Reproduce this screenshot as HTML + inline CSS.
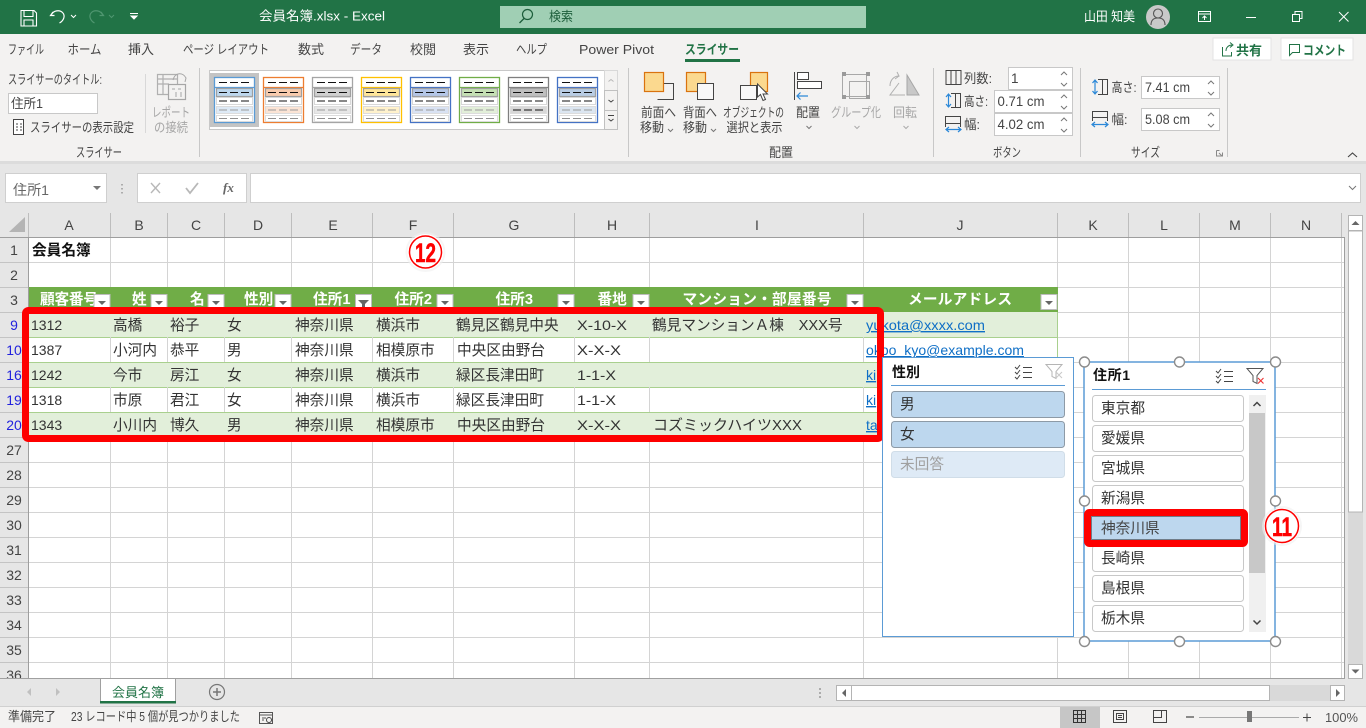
<!DOCTYPE html>
<html lang="ja"><head><meta charset="utf-8"><title>会員名簿.xlsx - Excel</title>
<style>
html,body{margin:0;padding:0;background:#e6e6e6;width:1366px;height:728px;overflow:hidden}
svg{display:block;position:absolute;left:0;top:0}
text{font-family:"Liberation Sans","Noto Sans CJK JP",sans-serif;font-size:12.8px;fill:#444}
.c{font-size:14.67px;fill:#333}
.n{font-size:14px;fill:#333}
.h{font-size:14.67px;fill:#fff;font-weight:bold}
.ch{font-size:14px;fill:#444;text-anchor:middle}
.rh{font-size:14px;fill:#444;text-anchor:middle}
.rb{font-size:14px;fill:#2222dd;text-anchor:middle}
.l{font-size:14px;fill:#0f6fc6;text-decoration:underline}
.g{fill:#a6a6a6}
.s{font-size:14.67px;fill:#333}
.sb{font-size:14px;fill:#111;font-weight:bold}
.w{fill:#fff}
.in{font-size:13.5px;fill:#444}
.ln{stroke:#d4d4d4;stroke-width:1}
.cv{fill:none;stroke:#777;stroke-width:1}
.g1{stroke:#444;fill:none;stroke-width:1}
.blue{stroke:#2b88d8;fill:none;stroke-width:1.2}
</style></head><body>
<svg width="1366" height="728" viewBox="0 0 1366 728" xmlns="http://www.w3.org/2000/svg">
<defs>
<g id="item">
<rect x="0.5" y="0.5" width="40" height="45" fill="#fff" stroke="var(--c)" stroke-width="1.3"/>
<line x1="0" y1="10.5" x2="41" y2="10.5" stroke="var(--c)" stroke-width="1.2"/>
<rect x="2.5" y="11.5" width="36" height="8" fill="var(--a)" stroke="#a0a0a0" stroke-width="1.2"/>
<rect x="2.5" y="20.5" width="36" height="7" fill="#fff" stroke="#d8d8d8"/>
<rect x="2.5" y="29.5" width="36" height="7" fill="var(--d)" stroke="#dcdcdc"/>
<rect x="2.5" y="38.5" width="36" height="6" fill="#fff" stroke="#dcdcdc"/>
<path d="M5 5.5h8M16 5.5h8M27 5.5h8M5 15.5h8M16 15.5h8M27 15.5h8M5 24h8M16 24h8M27 24h8" stroke="#111" stroke-width="1"/>
<path d="M5 33h8M16 33h8M27 33h8" stroke="var(--e,#999)" stroke-width="1"/>
<path d="M5 41.5h8M16 41.5h8M27 41.5h8" stroke="#8f8f8f" stroke-width="1"/>
</g>
<g id="spin"><path class="cv" d="M-3 3L0 0L3 3" stroke="#888"/><path class="cv" d="M-3 11L0 14L3 11"/></g>
<g id="fb"><rect x="0.5" y="0.5" width="16" height="15" fill="#fff" stroke="#bcbcbc"/><path d="M4.500 7h8l-4 4z" fill="#666"/></g>
<g id="multi"><path d="M0 3l2 2 3-4M0 8l2 2 3-4M0 13l2 2 3-4" fill="none" stroke="#444" stroke-width="1"/><path d="M8 3.500h9M8 8.500h9M8 13.500h9" stroke="#444" stroke-width="1"/></g>
<rect id="btn" x="0.5" y="0.500" width="151" height="26" rx="3" fill="#fff" stroke="#c8c8c8"/>
</defs>

<!-- title bar -->
<rect x="0" y="0" width="1366" height="34" fill="#217346"/>
<path d="M21 10.500h13l2.500 2.500v13h-15.500zM24 10.500v6h9v-6M24 26v-6h9v6" fill="none" stroke="#fff" stroke-width="1.100"/>
<path d="M53 13l-2.500 3.500h4M51.500 15.500c2-4 8-5 11-2 3 3 1.500 8-3 10.500" fill="none" stroke="#fff" stroke-width="1.200" transform="translate(0,-1)"/>
<path d="M71 15l2.500 2.500L76 15" fill="none" stroke="#fff"/>
<path d="M101 13l2.500 3.500h-4M102.500 15.500c-2-4-8-5-11-2-3 3-1.500 8 3 10.500" fill="none" stroke="#4f9670" stroke-width="1.200" transform="translate(0,-1)"/>
<path d="M109 15l2.500 2.500L114 15" fill="none" stroke="#4f9670"/>
<path d="M130 13.500h8M131 16l3 3 3-3z" fill="#fff" stroke="#fff"/>
<text x="259" y="20.500" class="w" textLength="126" lengthAdjust="spacingAndGlyphs">会員名簿.xlsx  -  Excel</text>
<rect x="500" y="6" width="366" height="22" fill="#a0cfb4"/>
<circle cx="527.500" cy="14.500" r="5" fill="none" stroke="#1d5e3b" stroke-width="1.200"/>
<path d="M524 18.500l-4.500 4.500" stroke="#1d5e3b" stroke-width="1.300"/>
<text x="549" y="21" style="fill:#1d5e3b" textLength="24" lengthAdjust="spacingAndGlyphs">検索</text>
<text x="1084" y="21" class="w" textLength="51" lengthAdjust="spacingAndGlyphs">山田 知美</text>
<circle cx="1158" cy="17" r="12" fill="#c9c9c9"/>
<circle cx="1158" cy="13.500" r="4.500" fill="none" stroke="#555" stroke-width="1.100"/>
<path d="M1151 25c0-5 3-7 7-7s7 2 7 7" fill="none" stroke="#555" stroke-width="1.100"/>
<path d="M1198.500 11.500h12v10h-12zM1198.500 14h12M1204.500 20v-4M1202.500 18l2-2 2 2" fill="none" stroke="#fff"/>
<path d="M1246 17.500h10" stroke="#fff"/>
<path d="M1292.500 14.500h7v7h-7zM1295 14.500v-3h7v7h-2.500" fill="none" stroke="#fff"/>
<path d="M1339 12l9.500 9.500M1348.500 12l-9.500 9.500" stroke="#fff"/>

<!-- ribbon -->
<rect x="0" y="34" width="1366" height="127" fill="#f3f2f1"/>
<rect x="0" y="161" width="1366" height="3" fill="#dcdcdc"/>
<g>
<text x="8" y="54" textLength="36" lengthAdjust="spacingAndGlyphs">ファイル</text>
<text x="67.500" y="54" textLength="34" lengthAdjust="spacingAndGlyphs">ホーム</text>
<text x="128" y="54" textLength="26" lengthAdjust="spacingAndGlyphs">挿入</text>
<text x="183" y="54" textLength="86" lengthAdjust="spacingAndGlyphs">ページ レイアウト</text>
<text x="298" y="54" textLength="26" lengthAdjust="spacingAndGlyphs">数式</text>
<text x="350" y="54" textLength="32" lengthAdjust="spacingAndGlyphs">データ</text>
<text x="410" y="54" textLength="26" lengthAdjust="spacingAndGlyphs">校閲</text>
<text x="463" y="54" textLength="26" lengthAdjust="spacingAndGlyphs">表示</text>
<text x="516" y="54" textLength="31" lengthAdjust="spacingAndGlyphs">ヘルプ</text>
<text x="579" y="54" textLength="75" lengthAdjust="spacingAndGlyphs">Power Pivot</text>
<text x="685" y="54" style="fill:#217346;font-weight:bold" textLength="54" lengthAdjust="spacingAndGlyphs">スライサー</text>
</g>
<rect x="685" y="59" width="55" height="3" fill="#217346"/>
<rect x="1213" y="38" width="58" height="22" fill="#fff" stroke="#e3e3e3"/>
<path d="M1222.500 47v9h9v-4M1226 51c0-4 3-6 6-6M1230 42.500l3 2.500-3 2.500" fill="none" stroke="#217346"/>
<text x="1236" y="55" style="fill:#217346;font-weight:bold;font-size:13px" textLength="26" lengthAdjust="spacingAndGlyphs">共有</text>
<rect x="1281" y="38" width="72" height="22" fill="#fff" stroke="#e3e3e3"/>
<path d="M1289.500 44.500h10v8h-7l-3 3z" fill="none" stroke="#217346"/>
<text x="1303" y="55" style="fill:#217346;font-weight:bold;font-size:13px" textLength="43" lengthAdjust="spacingAndGlyphs">コメント</text>

<text x="8" y="84" textLength="94" lengthAdjust="spacingAndGlyphs">スライサーのタイトル:</text>
<rect x="8.500" y="93.500" width="89" height="20" fill="#fff" stroke="#c8c8c8"/>
<text x="11" y="108" style="font-size:13px" textLength="32" lengthAdjust="spacingAndGlyphs">住所1</text>
<path d="M13.500 119.500h10v15h-10z" fill="#fff" stroke="#444"/>
<path d="M16 124h2M20 124h2M16 127h2M20 127h2M16 130h2M20 130h2" stroke="#444"/>
<text x="30" y="132" textLength="104" lengthAdjust="spacingAndGlyphs">スライサーの表示設定</text>
<line x1="145.500" y1="74" x2="145.500" y2="133" stroke="#d8d8d8"/>
<path d="M157.500 74.500h20v20h-20zM157.500 79h20M157 84h12M163 74v20" fill="none" stroke="#b0b0b0" stroke-width="1.200"/>
<rect x="168.500" y="84.500" width="17" height="15" fill="#f3f2f1" stroke="#a6a6a6" stroke-width="1.200"/>
<path d="M173 80c2-8 10-8 13-2l-1 4M172 89h3M178 89h3M176 92v5M181 92v5" fill="none" stroke="#a6a6a6"/>
<text x="152" y="117" class="g" textLength="38" lengthAdjust="spacingAndGlyphs">レポート</text>
<text x="154" y="132" class="g" textLength="34" lengthAdjust="spacingAndGlyphs">の接続</text>
<text x="76" y="157" textLength="46" lengthAdjust="spacingAndGlyphs">スライサー</text>
<line x1="199.500" y1="68" x2="199.500" y2="157" stroke="#c8c8c8"/>

<!-- gallery -->
<rect x="209.500" y="70.500" width="408" height="59" fill="#fff" stroke="#c8c8c8" stroke-width="1"/>
<rect x="210" y="73" width="49" height="54" fill="#c4c4c4"/>
<use href="#item" x="214" y="77" style="--c:#5b9bd5;--a:#bdd7ee;--d:#deeaf6"/>
<use href="#item" x="263" y="77" style="--c:#ed7d31;--a:#f8cbad;--d:#fbe4d5"/>
<use href="#item" x="312" y="77" style="--c:#a5a5a5;--a:#d0d0d0;--d:#e7e7e7"/>
<use href="#item" x="361" y="77" style="--c:#ffc000;--a:#ffe699;--d:#fff2cc"/>
<use href="#item" x="410" y="77" style="--c:#4472c4;--a:#b4c6e7;--d:#d9e2f3"/>
<use href="#item" x="459" y="77" style="--c:#70ad47;--a:#c5e0b4;--d:#e2efd9"/>
<use href="#item" x="508" y="77" style="--c:#7f7f7f;--a:#bfbfbf;--d:#d8d8d8;--e:#111"/>
<use href="#item" x="557" y="77" style="--c:#4472c4;--a:#b8cce4;--d:#dce6f1"/>
<rect x="604.500" y="70.500" width="13" height="20" fill="#f3f2f1" stroke="#d8d8d8"/>
<rect x="604.500" y="90.500" width="13" height="20" fill="#f3f2f1" stroke="#c0c0c0"/>
<rect x="604.500" y="110.500" width="13" height="19" fill="#f3f2f1" stroke="#c0c0c0"/>
<path d="M608.500 81.500l2.500-2 2.500 2" fill="none" stroke="#b8b8b8"/>
<path d="M608.500 100l2.500 2 2.500-2" fill="none" stroke="#444"/>
<path d="M608 115.500h6M608.500 119l2.500 2 2.500-2" fill="none" stroke="#444"/>
<line x1="628.500" y1="68" x2="628.500" y2="157" stroke="#c8c8c8"/>

<!-- arrange -->
<path d="M655 83.500h18.500v16h-16" fill="none" stroke="#444"/>
<rect x="644.500" y="72.500" width="19" height="19" fill="#fbd98f" stroke="#d9730f" stroke-width="1.200"/>
<text x="641" y="117" textLength="35" lengthAdjust="spacingAndGlyphs">前面へ</text>
<text x="640" y="132" textLength="24" lengthAdjust="spacingAndGlyphs">移動</text>
<path d="M668 129l2.500 2.500 2.500-2.500" class="cv"/>
<rect x="686.500" y="72.500" width="19" height="19" fill="#fbd98f" stroke="#d9730f" stroke-width="1.200"/>
<rect x="697.500" y="83.500" width="16" height="16" fill="#f8f8f8" stroke="#444"/>
<text x="683" y="117" textLength="34" lengthAdjust="spacingAndGlyphs">背面へ</text>
<text x="683" y="132" textLength="24" lengthAdjust="spacingAndGlyphs">移動</text>
<path d="M711 129l2.500 2.500 2.500-2.500" class="cv"/>
<rect x="750.500" y="72.500" width="17" height="19" fill="#fbd98f" stroke="#d9730f" stroke-width="1.200"/>
<rect x="740.500" y="85.500" width="16" height="14" fill="#f8f8f8" stroke="#444"/>
<path d="M757.500 84v13l3-2.500 2.500 6 2.500-1-2.500-5.500h4.500z" fill="#fff" stroke="#444"/>
<text x="723" y="117" textLength="61" lengthAdjust="spacingAndGlyphs">オブジェクトの</text>
<text x="726.500" y="132" textLength="56" lengthAdjust="spacingAndGlyphs">選択と表示</text>
<path d="M794.500 72v28" stroke="#444"/>
<rect x="797.500" y="72.500" width="11" height="7" fill="#fff" stroke="#444"/>
<rect x="797.500" y="81.500" width="24" height="7" fill="#fff" stroke="#444"/>
<path d="M808 96h-11M800.500 92.500L797 96l3.500 3.500" class="blue"/>
<text x="796" y="117" textLength="24" lengthAdjust="spacingAndGlyphs">配置</text>
<path d="M806.500 126l2.500 2.500 2.500-2.500" class="cv"/>
<path d="M842.500 74.500h24v22h-24zM849.500 81.500h20v17h-20z" fill="none" stroke="#a8a8a8"/>
<path d="M842 72h4v4h-4zM866 72h4v4h-4zM842 95h4v4h-4zM866 95h4v4h-4z" fill="#9a9a9a"/>
<text x="831" y="117" class="g" textLength="50" lengthAdjust="spacingAndGlyphs">グループ化</text>
<path d="M854.500 126l2.500 2.500 2.500-2.500" class="cv" style="stroke:#aaa"/>
<path d="M907 75l12 20h-12z" fill="#c8c8c8" stroke="#a6a6a6"/>
<path d="M905 95h-15l9-12M890 86c0-6 4-10 9-10l-2-4M899 76l-4 3" fill="none" stroke="#b0b0b0"/>
<text x="893" y="117" class="g" textLength="24" lengthAdjust="spacingAndGlyphs">回転</text>
<path d="M903.500 126l2.500 2.500 2.500-2.500" class="cv" style="stroke:#aaa"/>
<text x="769" y="157" textLength="24" lengthAdjust="spacingAndGlyphs">配置</text>
<line x1="933.500" y1="68" x2="933.500" y2="157" stroke="#c8c8c8"/>

<!-- buttons group -->
<path d="M946 70.500h15v14h-15zM951 70.500v14M956 70.500v14" class="g1"/>
<text x="964" y="83" textLength="28" lengthAdjust="spacingAndGlyphs">列数:</text>
<rect x="1008.500" y="67.500" width="64" height="22" fill="#fff" stroke="#c8c8c8"/>
<text x="1011" y="83" class="in">1</text><use href="#spin" x="1064" y="72"/>
<path d="M951 93.500h9.500v14H951M955.500 93.500v14" class="g1"/>
<path d="M948.500 94v13M946 97l2.500-3 2.500 3M946 104l2.500 3 2.500-3" class="blue"/>
<text x="964" y="106" textLength="24" lengthAdjust="spacingAndGlyphs">高さ:</text>
<rect x="994.500" y="90.500" width="78" height="22" fill="#fff" stroke="#c8c8c8"/>
<text x="997.500" y="106" class="in" textLength="47" lengthAdjust="spacingAndGlyphs">0.71 cm</text><use href="#spin" x="1064" y="95"/>
<path d="M945.500 116.500h15v7h-15zM945.500 123v4M960.500 123v4" class="g1"/>
<path d="M946 129.500h15M949 127l-3 2.500 3 2.500M958 127l3 2.500-3 2.500" class="blue"/>
<text x="964" y="129" textLength="16" lengthAdjust="spacingAndGlyphs">幅:</text>
<rect x="994.500" y="113.500" width="78" height="22" fill="#fff" stroke="#c8c8c8"/>
<text x="997.500" y="129" class="in" textLength="47" lengthAdjust="spacingAndGlyphs">4.02 cm</text><use href="#spin" x="1064" y="118"/>
<text x="993" y="157" textLength="28" lengthAdjust="spacingAndGlyphs">ボタン</text>
<line x1="1080.500" y1="68" x2="1080.500" y2="157" stroke="#c8c8c8"/>

<!-- size group -->
<path d="M1098 79.500h9.500v15H1098M1102.500 79.500v15" class="g1"/>
<path d="M1095 80v14M1092.500 83l2.500-3 2.500 3M1092.500 91l2.500 3 2.500-3" class="blue"/>
<text x="1111.500" y="92" textLength="25" lengthAdjust="spacingAndGlyphs">高さ:</text>
<rect x="1141.500" y="76.500" width="78" height="22" fill="#fff" stroke="#c8c8c8"/>
<text x="1145" y="92" class="in" textLength="45" lengthAdjust="spacingAndGlyphs">7.41 cm</text><use href="#spin" x="1211" y="81"/>
<path d="M1092.500 111.500h15v6h-15zM1092.500 117v4M1107.500 117v4" class="g1"/>
<path d="M1092 124.500h16M1095 122l-3 2.500 3 2.500M1105 122l3 2.500-3 2.500" class="blue"/>
<text x="1111.500" y="124" textLength="16" lengthAdjust="spacingAndGlyphs">幅:</text>
<rect x="1141.500" y="108.500" width="78" height="22" fill="#fff" stroke="#c8c8c8"/>
<text x="1145" y="124" class="in" textLength="45" lengthAdjust="spacingAndGlyphs">5.08 cm</text><use href="#spin" x="1211" y="113"/>
<text x="1131" y="157" textLength="29" lengthAdjust="spacingAndGlyphs">サイズ</text>
<path d="M1216.500 150.500h3M1216.500 150.500v5.500h6v-3M1219 153l3 3M1222.500 152.500v3.500h-3" fill="none" stroke="#888"/>
<line x1="1227.500" y1="68" x2="1227.500" y2="157" stroke="#c8c8c8"/>
<path d="M1348 157l4.500-4 4.500 4" fill="none" stroke="#444" stroke-width="1.100"/>

<!-- formula bar -->
<rect x="5.500" y="173.500" width="101" height="29" fill="#fff" stroke="#cfcfcf"/>
<text x="13" y="195" style="font-size:14px;fill:#666" textLength="36" lengthAdjust="spacingAndGlyphs">住所1</text>
<path d="M93 186h8l-4 4z" fill="#777"/>
<path d="M122 184v1.500M122 188v1.500M122 192v1.500" stroke="#999" stroke-width="1.500"/>
<rect x="137.500" y="173.500" width="109" height="29" fill="#fff" stroke="#cfcfcf"/>
<path d="M151 183l9 10M160 183l-9 10" stroke="#b8b8b8" stroke-width="1.400"/>
<path d="M186 188l4 5 8-10" fill="none" stroke="#b8b8b8" stroke-width="1.800"/>
<text x="223" y="192" style="font-family:'Liberation Serif',serif;font-style:italic;font-weight:bold;font-size:13px;fill:#666">fx</text>
<rect x="250.500" y="173.500" width="1110" height="29" fill="#fff" stroke="#cfcfcf"/>
<path d="M1349 186l3.500 3.500 3.500-3.500" fill="none" stroke="#777"/>

<!-- sheet -->
<rect x="28" y="237" width="1316" height="441" fill="#fff"/>
<rect x="0" y="213" width="1344" height="24" fill="#e6e6e6"/>
<rect x="0" y="237" width="28" height="441" fill="#e6e6e6"/>
<path d="M25 217v15H9z" fill="#b4b4b4"/>
<path class="ln" d="M110.500 237V678M167.500 237V678M224.500 237V678M291.500 237V678M372.500 237V678M453.500 237V678M574.500 237V678M649.500 237V678M863.500 237V678M1057.500 237V678M1128.500 237V678M1199.500 237V678M1270.500 237V678M1341.500 237V678"/>
<path class="ln" d="M28 262.500H1344M28 287.500H1344M28 312.500H1344M28 337.500H1344M28 362.500H1344M28 387.500H1344M28 412.500H1344M28 437.500H1344M28 462.500H1344M28 487.500H1344M28 512.500H1344M28 537.500H1344M28 562.500H1344M28 587.500H1344M28 612.500H1344M28 637.500H1344M28 662.500H1344"/>
<path stroke="#bdbdbd" d="M28.500 213V237M110.500 213V237M167.500 213V237M224.500 213V237M291.500 213V237M372.500 213V237M453.500 213V237M574.500 213V237M649.500 213V237M863.500 213V237M1057.500 213V237M1128.500 213V237M1199.500 213V237M1270.500 213V237M1341.500 213V237"/>
<path stroke="#c4c4c4" d="M0 262.500H28M0 287.500H28M0 312.500H28M0 337.500H28M0 362.500H28M0 387.500H28M0 412.500H28M0 437.500H28M0 462.500H28M0 487.500H28M0 512.500H28M0 537.500H28M0 562.500H28M0 587.500H28M0 612.500H28M0 637.500H28M0 662.500H28"/>
<path stroke="#9e9e9e" d="M0 237.500H1344M28.500 237V678M1344.500 237V678"/>
<text class="ch" x="69" y="230">A</text><text class="ch" x="139" y="230">B</text><text class="ch" x="196" y="230">C</text><text class="ch" x="258" y="230">D</text><text class="ch" x="333" y="230">E</text><text class="ch" x="413" y="230">F</text><text class="ch" x="514" y="230">G</text><text class="ch" x="612" y="230">H</text><text class="ch" x="757" y="230">I</text><text class="ch" x="960" y="230">J</text><text class="ch" x="1093" y="230">K</text><text class="ch" x="1164" y="230">L</text><text class="ch" x="1235" y="230">M</text><text class="ch" x="1306" y="230">N</text>
<text class="rh" x="14" y="255">1</text><text class="rh" x="14" y="280">2</text><text class="rh" x="14" y="305">3</text>
<text class="rb" x="14" y="330">9</text><text class="rb" x="14" y="355">10</text><text class="rb" x="14" y="380">16</text><text class="rb" x="14" y="405">19</text><text class="rb" x="14" y="430">20</text>
<text class="rh" x="14" y="455">27</text><text class="rh" x="14" y="480">28</text><text class="rh" x="14" y="505">29</text><text class="rh" x="14" y="530">30</text><text class="rh" x="14" y="555">31</text><text class="rh" x="14" y="580">32</text><text class="rh" x="14" y="605">33</text><text class="rh" x="14" y="630">34</text><text class="rh" x="14" y="655">35</text><text class="rh" x="14" y="680">36</text>
<rect x="0" y="678" width="1366" height="1" fill="#a0a0a0"/>

<text x="32" y="255" style="font-size:14.67px;font-weight:bold;fill:#111">会員名簿</text>
<!-- table -->
<rect x="29" y="287" width="1029" height="25" fill="#70ad47"/>
<rect x="29" y="312" width="1029" height="25" fill="#e2efda"/>
<rect x="29" y="337" width="1029" height="25" fill="#fff"/>
<rect x="29" y="362" width="1029" height="25" fill="#e2efda"/>
<rect x="29" y="387" width="1029" height="25" fill="#fff"/>
<rect x="29" y="412" width="1029" height="25" fill="#e2efda"/>
<path stroke="#a9d08e" d="M29 337.500H1058M29 362.500H1058M29 387.500H1058M29 412.500H1058M29 437.500H1058M1057.500 312V438"/>
<path class="ln" d="M110.500 337V362M167.500 337V362M224.500 337V362M291.500 337V362M372.500 337V362M453.500 337V362M574.500 337V362M649.500 337V362M863.500 337V362M110.500 387V412M167.500 387V412M224.500 387V412M291.500 387V412M372.500 387V412M453.500 387V412M574.500 387V412M649.500 387V412M863.500 387V412"/>
<text class="h" x="40" y="304" textLength="58">顧客番号</text><text class="h" x="132" y="304">姓</text><text class="h" x="190" y="304">名</text><text class="h" x="244" y="304">性別</text><text class="h" x="313" y="304">住所1</text><text class="h" x="394.500" y="304">住所2</text><text class="h" x="495.500" y="304">住所3</text><text class="h" x="597.500" y="304">番地</text><text class="h" x="682.500" y="304" textLength="149">マンション・部屋番号</text><text class="h" x="908" y="304" textLength="104">メールアドレス</text>
<use href="#fb" x="93.500" y="294"/><use href="#fb" x="150.500" y="294"/><use href="#fb" x="207.500" y="294"/><use href="#fb" x="274.500" y="294"/>
<rect x="355.500" y="294.500" width="16" height="15" fill="#fff" stroke="#bcbcbc"/><path d="M358 300h11l-4 4v5h-3v-5z" fill="#666"/>
<use href="#fb" x="436.500" y="294"/><use href="#fb" x="557.500" y="294"/><use href="#fb" x="632.500" y="294"/><use href="#fb" x="846.500" y="294"/><use href="#fb" x="1040.500" y="294"/>

<text class="n" x="31" y="330">1312</text><text class="c" x="113" y="330">高橋</text><text class="c" x="170" y="330">裕子</text><text class="c" x="227" y="330">女</text><text class="c" x="295" y="330">神奈川県</text><text class="c" x="376" y="330">横浜市</text><text class="c" x="456" y="330">鶴見区鶴見中央</text><text class="n" x="577" y="330" textLength="50" lengthAdjust="spacingAndGlyphs">X-10-X</text><text class="c" x="652" y="330">鶴見マンションＡ棟　XXX号</text><text class="l" x="866" y="330" textLength="119" lengthAdjust="spacingAndGlyphs">yukota@xxxx.com</text>
<text class="n" x="31" y="355">1387</text><text class="c" x="113" y="355">小河内</text><text class="c" x="170" y="355">恭平</text><text class="c" x="227" y="355">男</text><text class="c" x="295" y="355">神奈川県</text><text class="c" x="376" y="355">相模原市</text><text class="c" x="457" y="355">中央区由野台</text><text class="n" x="577" y="355" textLength="44" lengthAdjust="spacingAndGlyphs">X-X-X</text><text class="l" x="866" y="355" textLength="158" lengthAdjust="spacingAndGlyphs">okoo_kyo@example.com</text>
<text class="n" x="31" y="380">1242</text><text class="c" x="113" y="380">今市</text><text class="c" x="170" y="380">房江</text><text class="c" x="227" y="380">女</text><text class="c" x="295" y="380">神奈川県</text><text class="c" x="376" y="380">横浜市</text><text class="c" x="456" y="380">緑区長津田町</text><text class="n" x="577" y="380" textLength="39" lengthAdjust="spacingAndGlyphs">1-1-X</text><text class="l" x="866" y="380">ki</text>
<text class="n" x="31" y="405">1318</text><text class="c" x="113" y="405">市原</text><text class="c" x="170" y="405">君江</text><text class="c" x="227" y="405">女</text><text class="c" x="295" y="405">神奈川県</text><text class="c" x="376" y="405">横浜市</text><text class="c" x="456" y="405">緑区長津田町</text><text class="n" x="577" y="405" textLength="39" lengthAdjust="spacingAndGlyphs">1-1-X</text><text class="l" x="866" y="405">ki</text>
<text class="n" x="31" y="430">1343</text><text class="c" x="113" y="430">小川内</text><text class="c" x="170" y="430">博久</text><text class="c" x="227" y="430">男</text><text class="c" x="295" y="430">神奈川県</text><text class="c" x="376" y="430">相模原市</text><text class="c" x="457" y="430">中央区由野台</text><text class="n" x="577" y="430" textLength="44" lengthAdjust="spacingAndGlyphs">X-X-X</text><text class="c" x="653" y="430" textLength="149" lengthAdjust="spacingAndGlyphs">コズミックハイツXXX</text><text class="l" x="866" y="430">ta</text>

<rect x="25.500" y="310.500" width="855" height="128" rx="3" fill="none" stroke="#fe0000" stroke-width="7"/>

<!-- slicer gender -->
<rect x="882.500" y="357.500" width="191" height="279" fill="#fff" stroke="#5b9bd5"/>
<text x="892" y="377" class="sb">性別</text>
<line x1="891" y1="385.500" x2="1065" y2="385.500" stroke="#5b9bd5"/>
<use href="#multi" x="1015" y="364"/>
<path d="M1046 364.500h16l-6 7v7l-4-2v-5z" fill="none" stroke="#b5b5b5"/>
<path d="M1056 372l6 6M1062 372l-6 6" stroke="#c8c8c8"/>
<rect x="891.500" y="391.500" width="173" height="26" rx="3" fill="#bdd7ee" stroke="#8d9aa6"/>
<text x="900" y="409" class="s">男</text>
<rect x="891.500" y="421.500" width="173" height="26" rx="3" fill="#bdd7ee" stroke="#8d9aa6"/>
<text x="900" y="439" class="s">女</text>
<rect x="891.500" y="451.500" width="173" height="26" rx="3" fill="#deeaf6" stroke="#d0dde8"/>
<text x="900" y="469" class="s" style="fill:#a0a0a0">未回答</text>

<!-- slicer address -->
<rect x="1084" y="362" width="191" height="279" fill="#fff" stroke="#5b9bd5" stroke-width="1.500"/>
<text x="1093" y="380" class="sb" textLength="37">住所1</text>
<line x1="1092" y1="389.500" x2="1266" y2="389.500" stroke="#5b9bd5"/>
<use href="#multi" x="1216" y="368"/>
<path d="M1247 368.500h16l-6 7v8l-4-2v-6z" fill="none" stroke="#555"/>
<path d="M1258 378l5.500 5.500M1263.500 378l-5.500 5.500" stroke="#e33" stroke-width="1.100"/>
<use href="#btn" x="1092" y="395"/><text x="1101" y="413" class="s">東京都</text>
<use href="#btn" x="1092" y="425"/><text x="1101" y="443" class="s">愛媛県</text>
<use href="#btn" x="1092" y="455"/><text x="1101" y="473" class="s">宮城県</text>
<use href="#btn" x="1092" y="485"/><text x="1101" y="503" class="s">新潟県</text>
<use href="#btn" x="1092" y="545"/><text x="1101" y="563" class="s">長崎県</text>
<use href="#btn" x="1092" y="575"/><text x="1101" y="593" class="s">島根県</text>
<use href="#btn" x="1092" y="605"/><text x="1101" y="623" class="s">栃木県</text>
<rect x="1249" y="395" width="17" height="237" fill="#f0f0f0"/>
<rect x="1249" y="413" width="16" height="160" fill="#c8c8c8"/>
<path d="M1253.500 406l3.500-3.500 3.500 3.500M1253.500 620.500l3.500 3.500 3.500-3.500" fill="none" stroke="#444" stroke-width="1.500"/>
<rect x="1087.500" y="512.500" width="157" height="31" rx="2" fill="#bdd7ee" stroke="#fe0000" stroke-width="7"/>
<rect x="1091.500" y="516.500" width="149" height="23" fill="none" stroke="#222" stroke-dasharray="1 1"/>
<text x="1101" y="533" class="s" style="fill:#444">神奈川県</text>
<g fill="#fff" stroke="#8c8c8c" stroke-width="1.400">
<circle cx="1084.500" cy="362" r="5"/><circle cx="1179.500" cy="362" r="5"/><circle cx="1275.500" cy="362" r="5"/>
<circle cx="1084.500" cy="501" r="5"/><circle cx="1275.500" cy="501" r="5"/>
<circle cx="1084.500" cy="641.500" r="5"/><circle cx="1179.500" cy="641.500" r="5"/><circle cx="1275.500" cy="641.500" r="5"/>
</g>
<!-- callouts -->
<circle cx="425.500" cy="252" r="20" fill="#f0f0f0" opacity=".6"/><circle cx="425.500" cy="252" r="18" fill="#fff"/>
<circle cx="425.500" cy="252" r="16" fill="#fff" stroke="#fe0000" stroke-width="1.500"/>
<text x="415" y="262" style="font-size:27px;font-weight:bold;fill:#fe0000;stroke:#fe0000;stroke-width:.5" textLength="21" lengthAdjust="spacingAndGlyphs">12</text>
<circle cx="1282" cy="526" r="20" fill="#f0f0f0" opacity=".6"/><circle cx="1282" cy="526" r="18" fill="#fff"/>
<circle cx="1282" cy="526" r="16.500" fill="#fff" stroke="#fe0000" stroke-width="1.500"/>
<text x="1272" y="536" style="font-size:27px;font-weight:bold;fill:#fe0000;stroke:#fe0000;stroke-width:.5" textLength="20" lengthAdjust="spacingAndGlyphs">11</text>

<!-- v scrollbar -->
<rect x="1345" y="213" width="21" height="466" fill="#e6e6e6"/>
<rect x="1348" y="231" width="15" height="433" fill="#d9d9d9"/>
<rect x="1348.500" y="215.500" width="14" height="15" fill="#fff" stroke="#b4b4b4"/>
<path d="M1351.500 225h8l-4-4z" fill="#666"/>
<rect x="1348.500" y="231" width="14" height="281" fill="#fff" stroke="#b4b4b4"/>
<rect x="1348.500" y="664.500" width="14" height="14" fill="#fff" stroke="#b4b4b4"/>
<path d="M1351.500 669.500h8l-4 4z" fill="#666"/>

<!-- tab strip -->
<rect x="0" y="679" width="1366" height="27" fill="#e6e6e6"/>
<path d="M31 688v8l-4-4zM56 688v8l4-4z" fill="#c0c0c0"/>
<path d="M100.500 703V678.500H175.500V703" fill="#fff" stroke="#a0a0a0"/>
<rect x="100" y="701" width="76" height="2.500" fill="#217346"/>
<text x="112" y="697" style="font-size:13px;fill:#217346" textLength="52">会員名簿</text>
<circle cx="217" cy="692" r="7.500" fill="none" stroke="#777" stroke-width="1.200"/>
<path d="M213 692h8M217 688v8" stroke="#777" stroke-width="1.500"/>
<path d="M820 688v2M820 692v2M820 696v2" stroke="#999" stroke-width="1.500"/>
<rect x="836.500" y="685.500" width="507" height="15" fill="#d9d9d9" stroke="#d9d9d9"/>
<rect x="851.500" y="685.500" width="418" height="15" fill="#fff" stroke="#b4b4b4"/>
<rect x="836.500" y="685.500" width="15" height="15" fill="#fff" stroke="#b4b4b4"/>
<path d="M846 689v8l-4-4z" fill="#666"/>
<rect x="1330.500" y="685.500" width="14" height="15" fill="#fff" stroke="#b4b4b4"/>
<path d="M1336 689v8l4-4z" fill="#666"/>

<!-- status bar -->
<rect x="0" y="706" width="1366" height="22" fill="#f3f2f1"/>
<rect x="0" y="706" width="1366" height="1" fill="#d0d0d0"/>
<text x="8" y="721" textLength="48" lengthAdjust="spacingAndGlyphs">準備完了</text>
<text x="71" y="721" textLength="169" lengthAdjust="spacingAndGlyphs">23 レコード中 5 個が見つかりました</text>
<path d="M259.500 712.500h13v11h-13zM259.500 715h13M262 718h4M262 720h2" fill="none" stroke="#555"/>
<circle cx="269" cy="720" r="2.500" fill="#f3f2f1" stroke="#444"/>
<rect x="1060" y="707" width="40" height="21" fill="#c6c6c6"/>
<path d="M1073.500 710.500h12v12h-12zM1077.500 710.500v12M1081.500 710.500v12M1073.500 714.500h12M1073.500 718.500h12" fill="none" stroke="#333"/>
<path d="M1113.500 710.500h13v12h-13zM1116.500 713.500h7v6h-7zM1118 715.500h4M1118 717.500h4" fill="none" stroke="#444"/>
<path d="M1153.500 710.500h13v12h-13zM1153.500 717.500h8v-7" fill="none" stroke="#444"/>
<path d="M1186 717h8" stroke="#444" stroke-width="1.200"/>
<path d="M1199 717.500h100" stroke="#aaa"/>
<rect x="1247" y="711" width="5" height="11" fill="#777"/>
<path d="M1303 717.500h8M1307 713.500v8" stroke="#444"/>
<text x="1325" y="722" style="font-size:12.500px;fill:#555" textLength="33" lengthAdjust="spacingAndGlyphs">100%</text>
</svg>
</body></html>
